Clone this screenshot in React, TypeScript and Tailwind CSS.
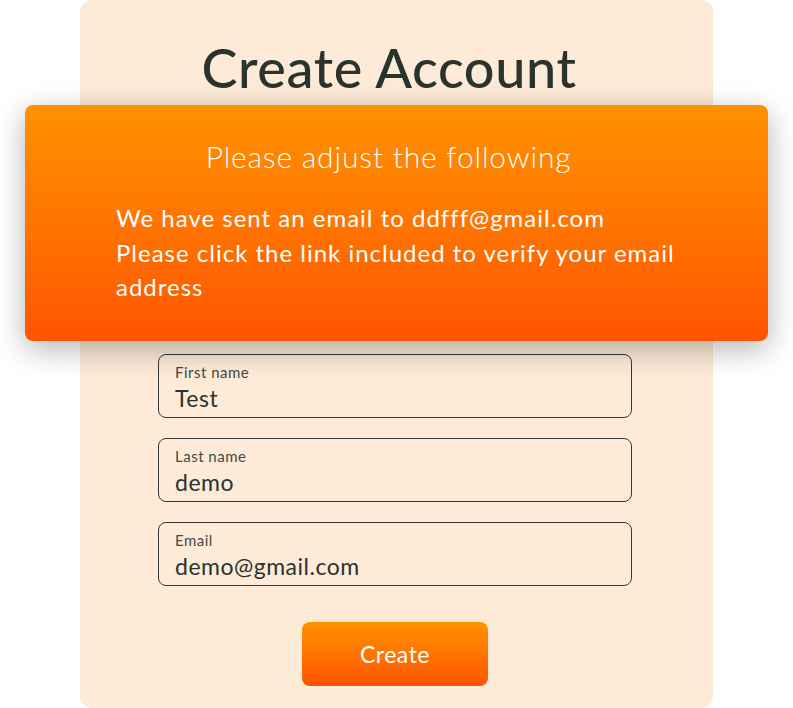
export default function App() {
  const fields = [
    { label: "First name", value: "Test" },
    { label: "Last name", value: "demo" },
    { label: "Email", value: "demo@gmail.com" },
  ];

  return (
    <div className="relative min-h-[708px] bg-white font-['Lato','Open_Sans',sans-serif]">
      {/* Card */}
      <div className="mx-auto flex h-[708px] w-[633px] flex-col items-center rounded-xl bg-[#fdead7] pr-[3px] pt-[36px]">
        <h1 className="mr-[12px] text-[54px] font-medium leading-[1.2] tracking-[0.6px] text-[#2b332f]">
          Create Account
        </h1>

        <form className="mt-[253px] flex w-[474px] flex-col gap-5">
          {fields.map((f) => (
            <div
              key={f.label}
              className="flex h-[64px] flex-col rounded-lg border border-[#333a36] px-4 pt-[7px]"
            >
              <span className="text-[15px] leading-[20px] tracking-[0.5px] text-[#444a46]">{f.label}</span>
              <span className="mt-[2px] text-[23px] leading-[28px] tracking-[0.5px] text-[#2b332f]">
                {f.value}
              </span>
            </div>
          ))}
        </form>

        <button className="mt-[36px] h-[64px] w-[186px] rounded-lg bg-gradient-to-b from-[#ff9100] to-[#ff5300] text-[23px] tracking-[0.5px] text-white">
          Create
        </button>
      </div>

      {/* Alert toast */}
      <div className="absolute left-[25px] top-[105px] h-[236px] w-[743px] rounded-lg bg-gradient-to-b from-[#ff9100] to-[#ff5300] shadow-[0_8px_30px_rgba(0,0,0,0.3)]">
        <h2 className="mr-[16px] pt-[33px] text-center text-[30px] font-light leading-[1.2] tracking-[0.8px] text-white">
          Please adjust the following
        </h2>
        <p className="mt-[27px] whitespace-nowrap px-[91px] text-[24px] leading-[34.5px] tracking-[1px] text-white">
          We have sent an email to ddfff@gmail.com
          <br />
          Please click the link included to verify your email
          <br />
          address
        </p>
      </div>
    </div>
  );
}
